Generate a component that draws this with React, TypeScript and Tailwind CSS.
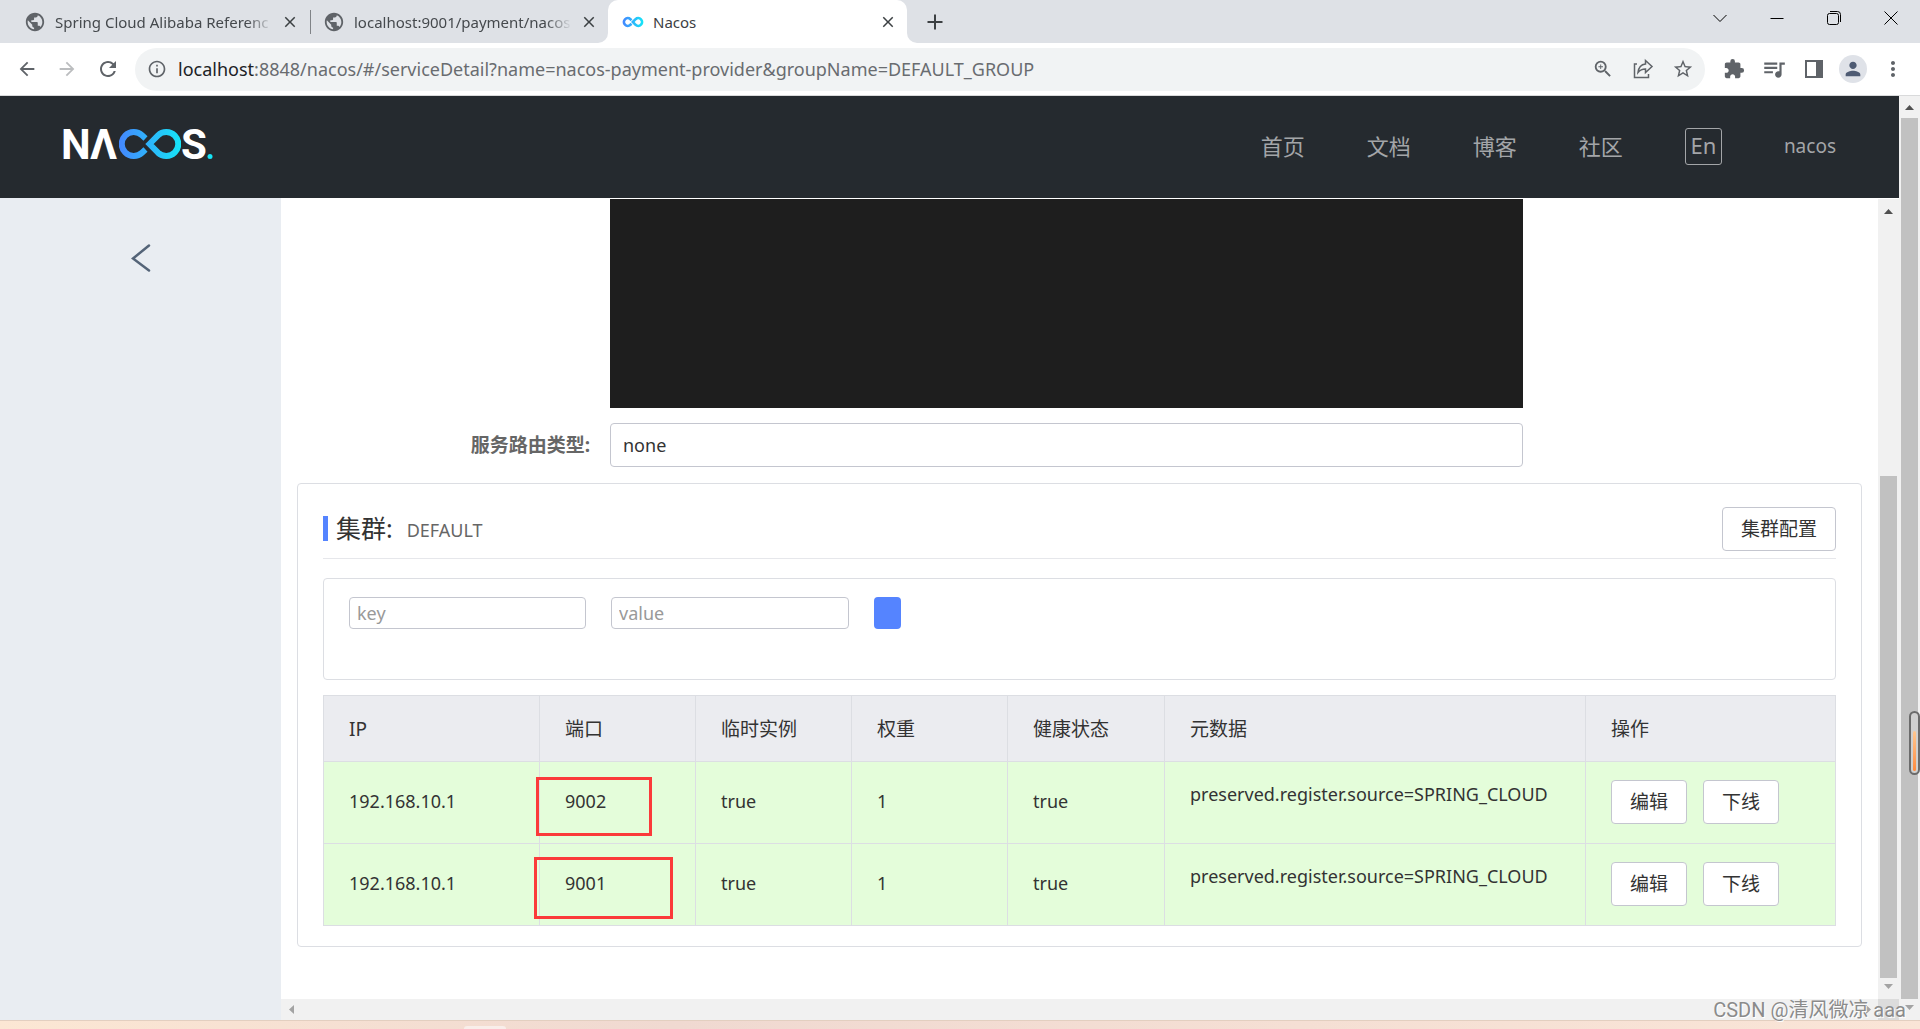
import type { ReactNode } from 'react';
import {
  MdArrowBack,
  MdArrowForward,
  MdClose,
  MdExtension,
  MdInfoOutline,
  MdMoreVert,
  MdOutlineZoomIn,
  MdPerson,
  MdPublic,
  MdQueueMusic,
  MdRefresh,
  MdStarBorder,
} from 'react-icons/md';

const instances = [
  {
    ip: '192.168.10.1',
    port: 9002,
    ephemeral: true,
    weight: 1,
    healthy: true,
    metadata: 'preserved.register.source=SPRING_CLOUD',
    mark: '-left-[4px] top-[15px] h-[59px] w-[116px]',
  },
  {
    ip: '192.168.10.1',
    port: 9001,
    ephemeral: true,
    weight: 1,
    healthy: true,
    metadata: 'preserved.register.source=SPRING_CLOUD',
    mark: '-left-[6px] top-[13px] h-[62px] w-[139px]',
  },
];

const columns = [
  { title: 'IP', width: 'w-[216px]' },
  { title: '端口', width: 'w-[156px]' },
  { title: '临时实例', width: 'w-[156px]' },
  { title: '权重', width: 'w-[156px]' },
  { title: '健康状态', width: 'w-[157px]' },
  { title: '元数据', width: '' },
  { title: '操作', width: 'w-[250px]' },
];

const navLinks = ['首页', '文档', '博客', '社区'];

function InfinityMark({ className, id, thick }: { className: string; id: string; thick: number }) {
  return (
    <svg className={className} viewBox="0 0 62 30" fill="none" stroke={`url(#${id})`} strokeWidth={thick}>
      <defs>
        <linearGradient id={id} gradientUnits="userSpaceOnUse" x1="0" y1="0" x2="62" y2="0">
          <stop offset="0" stopColor="#4587ff" />
          <stop offset="1" stopColor="#15e5f7" />
        </linearGradient>
      </defs>
      <path d="M26.5 9.5L23 6.3A12 12 0 1 0 23 23.7L26.5 20.5" />
      <path d="M30.5 15L39 6.3A12 12 0 1 1 39 23.7Z" />
    </svg>
  );
}

function Tab({ title, className }: { title: string; className: string }) {
  return (
    <div className={`flex items-center ${className}`}>
      <MdPublic className="size-[22px] shrink-0 text-[#5f6368]" />
      <span className="ml-[9px] min-w-0 flex-1 whitespace-nowrap text-[15px] leading-5 text-[#45494d] [mask-image:linear-gradient(to_right,black_88%,transparent)]">
        {title}
      </span>
      <button aria-label="Close tab" className="ml-2 text-[#3c4043]">
        <MdClose className="size-[18px]" />
      </button>
    </div>
  );
}

function BrowserChrome() {
  return (
    <div className="shrink-0">
      <div className="flex h-[43px] items-center bg-[#dee1e6]">
        <Tab title="Spring Cloud Alibaba Referenc" className="w-[299px] pl-6" />
        <div className="ml-[11px] h-6 w-px bg-[#808387]" />
        <Tab title="localhost:9001/payment/nacos" className="w-[287px] pl-3" />
        <div className="flex w-2.5 self-stretch bg-white">
          <div className="flex-1 rounded-br-[10px] bg-[#dee1e6]" />
        </div>
        <div className="flex w-[299px] items-center self-stretch rounded-t-[10px] bg-white pl-[15px] pr-2.5">
          <InfinityMark id="favicon" thick={8} className="h-2.5 w-5 overflow-visible" />
          <span className="ml-2.5 flex-1 text-[15px] leading-5 text-[#3c4043]">Nacos</span>
          <button aria-label="Close tab" className="text-[#3c4043]">
            <MdClose className="size-[18px]" />
          </button>
        </div>
        <div className="flex w-2.5 self-stretch bg-white">
          <div className="flex-1 rounded-bl-[10px] bg-[#dee1e6]" />
        </div>
        <button aria-label="New tab" className="ml-2.5 text-[#3c4043]">
          <svg className="size-4" viewBox="0 0 16 16" stroke="currentColor" strokeWidth="2">
            <path d="M8 0.5v15M0.5 8h15" />
          </svg>
        </button>
        <div className="mb-[7px] ml-auto mr-[22px] flex items-center gap-[43px] text-black">
          <button aria-label="Search tabs">
            <svg className="size-3.5" viewBox="0 0 14 14" fill="none" stroke="currentColor">
              <path d="M0.5 4l6.5 6.5L13.5 4" />
            </svg>
          </button>
          <button aria-label="Minimize">
            <svg className="size-3.5" viewBox="0 0 14 14" stroke="currentColor">
              <path d="M0.5 7.5h13" />
            </svg>
          </button>
          <button aria-label="Restore">
            <svg className="size-3.5" viewBox="0 0 14 14" fill="none" stroke="currentColor">
              <rect x="0.5" y="2.5" width="11" height="11" rx="2" />
              <path d="M3 0.5h7.5a3 3 0 0 1 3 3V11" />
            </svg>
          </button>
          <button aria-label="Close">
            <svg className="size-3.5" viewBox="0 0 14 14" stroke="currentColor">
              <path d="M0.5 0.5l13 13M13.5 0.5l-13 13" />
            </svg>
          </button>
        </div>
      </div>

      {/* Toolbar */}
      <div className="flex h-[53px] items-center border-b border-[#d9dadb] bg-white text-[#5f6368]">
        <button aria-label="Back" className="ml-4">
          <MdArrowBack className="size-[22px]" />
        </button>
        <button aria-label="Forward" className="ml-[18px] text-[#bbbdbf]">
          <MdArrowForward className="size-[22px]" />
        </button>
        <button aria-label="Reload" className="ml-[18px]">
          <MdRefresh className="size-6" />
        </button>
        <div className="ml-[15px] flex h-[43px] flex-1 items-center rounded-full bg-[#f1f3f4] pl-3 pr-[11px]">
          <MdInfoOutline className="size-5 shrink-0" />
          <p className="ml-[11px] flex-1 whitespace-nowrap text-[18px] leading-6 text-[#696c70]">
            <span className="text-[#202124]">localhost</span>
            :8848/nacos/#/serviceDetail?name=nacos-payment-provider&amp;groupName=DEFAULT_GROUP
          </p>
          <div className="flex items-center gap-[18px]">
            <button aria-label="Zoom">
              <MdOutlineZoomIn className="size-[22px]" />
            </button>
            <button aria-label="Share">
              <svg className="size-[22px]" viewBox="0 0 22 22" fill="none" stroke="currentColor" strokeWidth="1.5">
                <path d="M5 6H2.5v13.5h14V16" />
                <path d="M13.5 2.5L20 8.5l-6.500 6V11c-3.5 0-5.5 1-7.5 3.500C6.500 10 9 6.500 13.500 6z" />
              </svg>
            </button>
            <button aria-label="Bookmark">
              <MdStarBorder className="size-[22px]" />
            </button>
          </div>
        </div>
        <div className="ml-[18px] mr-[17px] flex items-center gap-4">
          <button aria-label="Extensions">
            <MdExtension className="size-[22px]" />
          </button>
          <button aria-label="Media" className="mr-0.5">
            <MdQueueMusic className="size-[26px]" />
          </button>
          <button aria-label="Side panel" className="flex size-[18px] border-2 border-r-[7px] border-current" />
          <button aria-label="Profile" className="flex size-7 items-center justify-center rounded-full bg-[#dfe2e8] text-[#4e5b73]">
            <MdPerson className="size-[22px]" />
          </button>
          <button aria-label="Menu" className="flex w-5 justify-center">
            <MdMoreVert className="size-6 shrink-0" />
          </button>
        </div>
      </div>
    </div>
  );
}

function Arrow({ d, className }: { d: string; className: string }) {
  return (
    <svg className={`size-[9px] shrink-0 ${className}`} viewBox="0 0 9 9" fill="currentColor">
      <path d={d} />
    </svg>
  );
}

const UP = 'M0 7L4.5 2L9 7Z';
const DOWN = 'M0 2L4.5 7L9 2Z';
const LEFT = 'M7 0L2 4.5L7 9Z';
const RIGHT = 'M2 0L7 4.5L2 9Z';

function Logo() {
  return (
    <svg className="h-[30px] w-[150px] overflow-visible" viewBox="0 0 150 30" role="img" aria-label="NACOS.">
      <g fill="#fff" fontFamily="Roboto, sans-serif" fontWeight="700" fontSize="42">
        <text x="-2" y="30">N</text>
        <text x="27" y="30">Λ</text>
        <text x="118" y="30">S</text>
      </g>
      <circle cx="147" cy="27.5" r="2.5" fill="#15e5f7" />
      <svg x="56" y="0" width="62" height="30">
        <InfinityMark id="logo" thick={6} className="" />
      </svg>
    </svg>
  );
}

function Header() {
  return (
    <header className="flex h-[102px] shrink-0 items-center justify-between bg-[#252a2f] pl-[63px] pr-[63px] text-[#a3a5a8]">
      <a href="#/" className="mb-1.5">
        <Logo />
      </a>
      <nav className="mb-0.5 flex items-center gap-[62px]">
        {navLinks.map((link) => (
          <a key={link} href="#/" className="text-[22px] leading-8">
            {link}
          </a>
        ))}
        <button className="h-[37px] w-[37px] rounded-[3px] border border-current pb-[3px] text-[22px] leading-8">En</button>
        <a href="#/" className="text-[19px] leading-8">
          nacos
        </a>
      </nav>
    </header>
  );
}

function DefaultButton({ children }: { children: ReactNode }) {
  return (
    <button className="h-11 rounded-[4px] border border-[#c4c6cf] bg-white px-[18px] text-[19px] leading-6 text-[#333]">
      {children}
    </button>
  );
}

function ClusterCard() {
  return (
    <section className="rounded-[4px] border border-[#dcdee3] px-[25px] pb-5 pt-[23px]">
      <div className="flex items-start justify-between border-b border-[#e6e7eb] pb-[7px]">
        <h2 className="flex h-11 items-center pb-0.5">
          <span className="h-[25px] w-[5px] bg-[#5584ff]" />
          <span className="ml-2 text-[25px] leading-8 text-[#333]">集群:</span>
          <span className="ml-3.5 mt-1 text-[18px] leading-6 text-[#666]">DEFAULT</span>
        </h2>
        <DefaultButton>集群配置</DefaultButton>
      </div>

      <form className="mt-[19px] flex h-[102px] items-start rounded-[4px] border border-[#dcdee3] px-[25px] pt-[18px]">
        <input
          aria-label="key"
          placeholder="key"
          className="h-8 w-[237px] rounded-[4px] border border-[#c4c6cf] px-[7px] text-[18px] placeholder:text-[#999]"
        />
        <input
          aria-label="value"
          placeholder="value"
          className="ml-[25px] h-8 w-[238px] rounded-[4px] border border-[#c4c6cf] px-[7px] text-[18px] placeholder:text-[#999]"
        />
        <button type="button" aria-label="Add filter" className="ml-[25px] h-8 w-[27px] rounded-[4px] bg-[#5584ff]" />
      </form>

      <table className="mt-[15px] w-full table-fixed border-collapse text-left text-[18px] leading-6 text-[#333]">
        <thead className="bg-[#ebecf0] text-[19px]">
          <tr className="h-[66px]">
            {columns.map((column) => (
              <th key={column.title} className={`border border-[#dcdee3] px-[25px] font-normal ${column.width}`}>
                {column.title}
              </th>
            ))}
          </tr>
        </thead>
        <tbody className="bg-[#e4fdda]">
          {instances.map((item) => (
            <tr key={item.port} className="h-[82px]">
              <td className="border border-[#dcdee3] px-[25px] pb-[3px]">{item.ip}</td>
              <td className="relative border border-[#dcdee3] px-[25px] pb-[3px]">
                {item.port}
                <span className={`absolute border-[3px] border-[#fb3a3a] ${item.mark}`} />
              </td>
              <td className="border border-[#dcdee3] px-[25px] pb-[3px]">{String(item.ephemeral)}</td>
              <td className="border border-[#dcdee3] px-[25px] pb-[3px]">{item.weight}</td>
              <td className="border border-[#dcdee3] px-[25px] pb-[3px]">{String(item.healthy)}</td>
              <td className="border border-[#dcdee3] px-[25px] pb-[18px]">{item.metadata}</td>
              <td className="border border-[#dcdee3] px-[25px] pb-0.5">
                <div className="flex gap-4">
                  <DefaultButton>编辑</DefaultButton>
                  <DefaultButton>下线</DefaultButton>
                </div>
              </td>
            </tr>
          ))}
        </tbody>
      </table>
    </section>
  );
}

export default function App() {
  return (
    <div className="relative flex h-screen flex-col overflow-hidden bg-white font-['Noto_Sans','Noto_Sans_CJK_SC',sans-serif]">
      <BrowserChrome />

      <div className="flex min-h-0 flex-1">
        <div className="flex min-w-0 flex-1 flex-col">
          <Header />
          <div className="flex min-h-0 flex-1">
            <aside className="w-[281px] shrink-0 bg-[#e9edf2] pt-[46px]">
              <button aria-label="Back to list" className="mx-auto block text-[#546478]">
                <svg className="h-7 w-5" viewBox="0 0 20 28" fill="none" stroke="currentColor" strokeWidth="2.5" strokeLinecap="round">
                  <path d="M18 1.5L2 14.5L18 26.5" />
                </svg>
              </button>
            </aside>

            <div className="mt-px flex min-w-0 flex-1 flex-col">
              <div className="flex min-h-0 flex-1">
                <main className="min-w-0 flex-1 overflow-hidden px-4">
                  <div className="ml-[20%] h-[209px] w-7/12 bg-[#1e1e1e]" />
                  <div className="mb-4 mt-[15px] flex items-center">
                    <label htmlFor="selector" className="w-1/5 pr-5 text-right text-[19px] font-bold leading-6 text-[#666]">
                      服务路由类型:
                    </label>
                    <input
                      id="selector"
                      readOnly
                      value="none"
                      className="h-11 w-7/12 rounded-[4px] border border-[#c4c6cf] px-3 text-[18px] text-[#333]"
                    />
                  </div>
                  <ClusterCard />
                </main>
                <div className="flex w-[21px] flex-col items-center bg-[#f1f1f1] pb-2 pt-2">
                  <Arrow d={UP} className="text-[#505050]" />
                  <div className="mb-1 mt-[260px] w-[17px] flex-1 bg-[#c1c1c1]" />
                  <Arrow d={DOWN} className="text-[#a3a3a3]" />
                </div>
              </div>
              <div className="flex h-[21px] shrink-0 items-center bg-[#f1f1f1] pl-1.5">
                <Arrow d={LEFT} className="text-[#a3a3a3]" />
                <Arrow d={RIGHT} className="ml-auto mr-[5px] text-[#a3a3a3]" />
                <div className="size-[21px] bg-[#dcdcdc]" />
              </div>
            </div>
          </div>
        </div>

        <div className="flex w-[21px] flex-col items-center bg-[#f1f1f1] pb-2 pt-[7px]">
          <Arrow d={UP} className="text-[#505050]" />
          <div className="mb-1 mt-1.5 w-[17px] flex-1 bg-[#c1c1c1]" />
          <Arrow d={DOWN} className="text-[#a3a3a3]" />
        </div>
      </div>

      {/* Desktop strip under the window */}
      <div className="flex h-[9px] shrink-0 items-end border-t border-[#e3cfc0] bg-linear-to-r from-[#fce7d4] via-[#f0d9d1] via-35% to-[#fae5d7]">
        <div className="ml-[464px] h-[3px] w-[42px] rounded-t-[3px] bg-[#f9eeea]" />
      </div>

      {/* Floating meter */}
      <div className="absolute right-0 top-[711px] flex h-16 w-[11px] items-end rounded-full border-2 border-[#6b6b6b] bg-[#d0d0d0] p-0.5">
        <div className="h-10 w-full rounded-full bg-linear-to-b from-[#ffc78f] to-[#ff8a3d]" />
      </div>

      <p className="absolute bottom-[7px] right-3.5 font-['Roboto','Noto_Sans_CJK_SC',sans-serif] text-[20px] leading-6 text-[#8b8b8b] [text-shadow:1px_1px_0_white]">
        CSDN @清风微凉 aaa
      </p>
    </div>
  );
}
